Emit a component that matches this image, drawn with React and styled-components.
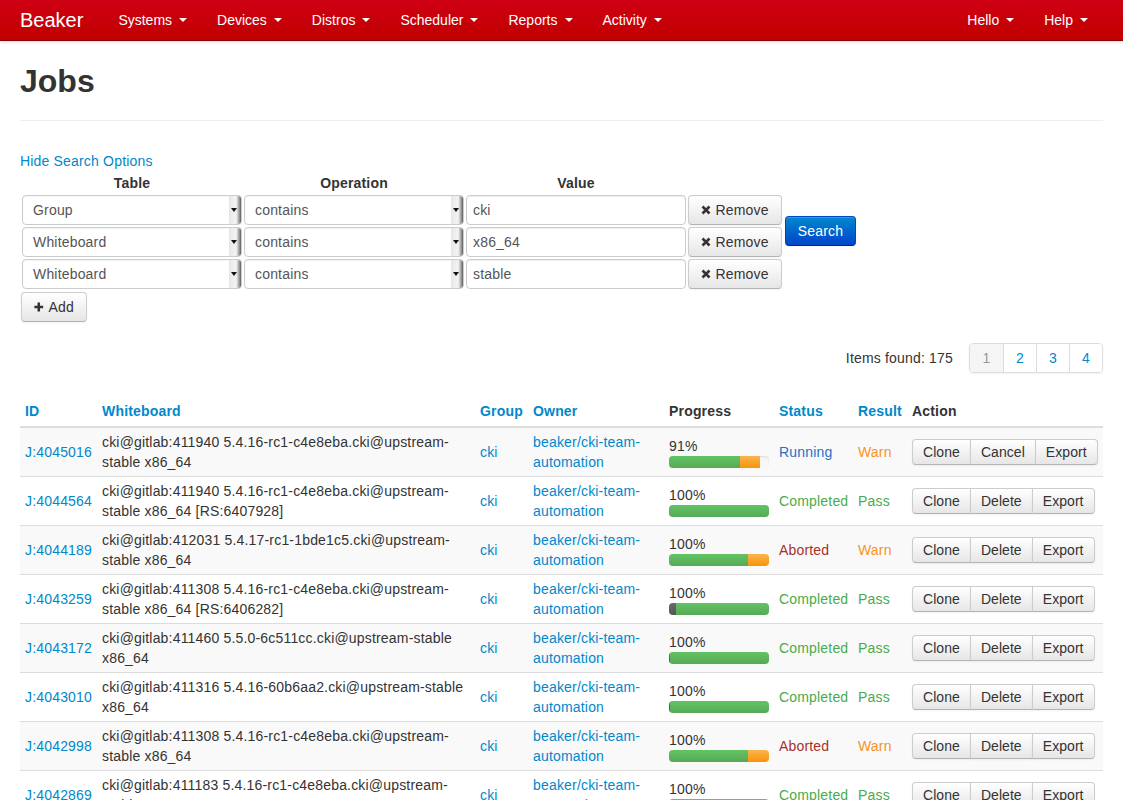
import React from 'react'
import styled, { createGlobalStyle } from 'styled-components'

const GlobalStyle = createGlobalStyle`
  body {
    margin: 0;
    background: #fff;
    font-family: "Liberation Sans", Arial, sans-serif;
    font-size: 14px;
    line-height: 20px;
    letter-spacing: 0.18px;
    color: #333;
  }
  * { box-sizing: border-box; }
`

const navLeft = ['Systems', 'Devices', 'Distros', 'Scheduler', 'Reports', 'Activity']
const navRight = ['Hello', 'Help']

const filters = [
  { table: 'Group', op: 'contains', value: 'cki' },
  { table: 'Whiteboard', op: 'contains', value: 'x86_64' },
  { table: 'Whiteboard', op: 'contains', value: 'stable' },
]

const jobs = [
  { id: 'J:4045016', wb: 'cki@gitlab:411940 5.4.16-rc1-c4e8eba.cki@upstream-stable x86_64', pct: '91%', bar: [0, 71, 20], status: 'Running', result: 'Warn', mid: 'Cancel' },
  { id: 'J:4044564', wb: 'cki@gitlab:411940 5.4.16-rc1-c4e8eba.cki@upstream-stable x86_64 [RS:6407928]', pct: '100%', bar: [0, 100, 0], status: 'Completed', result: 'Pass', mid: 'Delete' },
  { id: 'J:4044189', wb: 'cki@gitlab:412031 5.4.17-rc1-1bde1c5.cki@upstream-stable x86_64', pct: '100%', bar: [0, 79, 21], status: 'Aborted', result: 'Warn', mid: 'Delete' },
  { id: 'J:4043259', wb: 'cki@gitlab:411308 5.4.16-rc1-c4e8eba.cki@upstream-stable x86_64 [RS:6406282]', pct: '100%', bar: [7, 93, 0], status: 'Completed', result: 'Pass', mid: 'Delete' },
  { id: 'J:4043172', wb: 'cki@gitlab:411460 5.5.0-6c511cc.cki@upstream-stable x86_64', pct: '100%', bar: [1, 99, 0], status: 'Completed', result: 'Pass', mid: 'Delete' },
  { id: 'J:4043010', wb: 'cki@gitlab:411316 5.4.16-60b6aa2.cki@upstream-stable x86_64', pct: '100%', bar: [1, 99, 0], status: 'Completed', result: 'Pass', mid: 'Delete' },
  { id: 'J:4042998', wb: 'cki@gitlab:411308 5.4.16-rc1-c4e8eba.cki@upstream-stable x86_64', pct: '100%', bar: [0, 79, 21], status: 'Aborted', result: 'Warn', mid: 'Delete' },
  { id: 'J:4042869', wb: 'cki@gitlab:411183 5.4.16-rc1-c4e8eba.cki@upstream-stable x86_64', pct: '100%', bar: [0, 100, 0], status: 'Completed', result: 'Pass', mid: 'Delete' },
]

const statusColors = {
  Running: '#2a6fc4',
  Completed: '#4aab4a',
  Aborted: '#a8302c',
  Warn: '#f7941d',
  Pass: '#4aab4a',
}

export default function App() {
  return (
    <>
      <GlobalStyle />
      <Navbar>
        <Brand>Beaker</Brand>
        <NavList>
          {navLeft.map(n => (
            <NavItem key={n}>{n}<Caret /></NavItem>
          ))}
        </NavList>
        <NavList right>
          {navRight.map(n => (
            <NavItem key={n}>{n}<Caret /></NavItem>
          ))}
        </NavList>
      </Navbar>

      <Container>
        <PageHeader>
          <Title>Jobs</Title>
        </PageHeader>

        <Link>Hide Search Options</Link>

        <SearchArea>
          <SearchGrid>
            <ColLabel>Table</ColLabel>
            <ColLabel>Operation</ColLabel>
            <ColLabel>Value</ColLabel>
            <span />
            {filters.map((f, i) => (
              <React.Fragment key={i}>
                <Select>
                  {f.table}
                  <SelectArrow />
                </Select>
                <Select>
                  {f.op}
                  <SelectArrow />
                </Select>
                <TextInput>{f.value}</TextInput>
                <Button>
                  <svg width="10" height="10" viewBox="0 0 10 10">
                    <path d="M1.5 1.5 L8.5 8.5 M8.5 1.5 L1.5 8.5" stroke="#333" strokeWidth="2.6" strokeLinecap="butt" />
                  </svg>
                  Remove
                </Button>
              </React.Fragment>
            ))}
          </SearchGrid>
          <PrimaryButton>Search</PrimaryButton>
        </SearchArea>

        <AddButton>
          <svg width="12" height="12" viewBox="0 0 12 12">
            <path d="M6 0.5 V11.5 M0.5 6 H11.5" stroke="#333" strokeWidth="3.2" />
          </svg>
          Add
        </AddButton>

        <ResultsBar>
          <span>Items found: 175</span>
          <Pagination>
            {['1', '2', '3', '4'].map((p, i) => (
              <PageLink key={p} active={i === 0}>{p}</PageLink>
            ))}
          </Pagination>
        </ResultsBar>

        <Table>
          <colgroup>
            <col style={{ width: 77 }} />
            <col style={{ width: 378 }} />
            <col style={{ width: 53 }} />
            <col style={{ width: 136 }} />
            <col style={{ width: 110 }} />
            <col style={{ width: 79 }} />
            <col style={{ width: 54 }} />
            <col style={{ width: 196 }} />
          </colgroup>
          <thead>
            <tr>
              <Th link>ID</Th>
              <Th link>Whiteboard</Th>
              <Th link>Group</Th>
              <Th link>Owner</Th>
              <Th>Progress</Th>
              <Th link>Status</Th>
              <Th link>Result</Th>
              <Th>Action</Th>
            </tr>
          </thead>
          <tbody>
            {jobs.map((j, i) => (
              <Row key={j.id} striped={i % 2 === 0}>
                <Td><Link>{j.id}</Link></Td>
                <Td>{j.wb}</Td>
                <Td><Link>cki</Link></Td>
                <Td><Link>beaker/cki-team-automation</Link></Td>
                <Td>
                  <div>{j.pct}</div>
                  <Progress>
                    <Segment kind="dark" style={{ width: `${j.bar[0]}%` }} />
                    <Segment kind="green" style={{ width: `${j.bar[1]}%` }} />
                    <Segment kind="orange" style={{ width: `${j.bar[2]}%` }} />
                  </Progress>
                </Td>
                <Td><Status color={statusColors[j.status]}>{j.status}</Status></Td>
                <Td><Status color={statusColors[j.result]}>{j.result}</Status></Td>
                <Td>
                  <BtnGroup>
                    <GroupBtn>Clone</GroupBtn>
                    <GroupBtn>{j.mid}</GroupBtn>
                    <GroupBtn>Export</GroupBtn>
                  </BtnGroup>
                </Td>
              </Row>
            ))}
          </tbody>
        </Table>
      </Container>
    </>
  )
}

const Navbar = styled.div`
  display: flex;
  align-items: center;
  height: 41px;
  padding: 0 20px;
  background: linear-gradient(to bottom, #cf0014, #c00000);
  border-bottom: 1px solid #8a0000;
  box-shadow: 0 1px 3px rgba(0, 0, 0, 0.15);
`

const Brand = styled.div`
  color: #fff;
  font-size: 20px;
  line-height: 20px;
  letter-spacing: 0;
  padding: 10px 20px 10px 0;
`

const NavList = styled.div`
  display: flex;
  margin-left: ${props => (props.right ? 'auto' : '0')};
`

const NavItem = styled.div`
  display: flex;
  align-items: center;
  color: #fff;
  padding: 10px 15px;
  font-size: 14px;
  letter-spacing: 0;
`

const Caret = styled.span`
  display: inline-block;
  margin-left: 7px;
  width: 0;
  height: 0;
  border-left: 4px solid transparent;
  border-right: 4px solid transparent;
  border-top: 4px solid #fff;
`

const Container = styled.div`
  padding: 0 20px;
`

const PageHeader = styled.div`
  padding: 20px 0 9px;
  border-bottom: 1px solid #eee;
  margin-bottom: 30px;
`

const Title = styled.h1`
  margin: 0 0 10px;
  font-size: 32px;
  line-height: 40px;
  font-weight: bold;
  letter-spacing: 0;
  color: #333;
`

const Link = styled.a`
  color: #0088cc;
  cursor: pointer;
  display: inline-block;
`

const SearchArea = styled.div`
  display: flex;
  align-items: flex-start;
`

const SearchGrid = styled.div`
  display: grid;
  grid-template-columns: 220px 220px 220px 94px;
  grid-auto-rows: 30px;
  grid-template-rows: 20px;
  gap: 2px;
  padding: 2px;
`

const ColLabel = styled.div`
  font-weight: bold;
  text-align: center;
  line-height: 20px;
`

const Select = styled.div`
  position: relative;
  border: 1px solid #ccc;
  border-radius: 4px;
  background: #fff;
  color: #555;
  padding: 4px 10px;
  line-height: 20px;
  box-shadow: inset 0 1px 1px rgba(0, 0, 0, 0.04);
`

const SelectArrow = styled.span`
  position: absolute;
  right: 0;
  top: 0;
  bottom: 0;
  width: 12px;
  background: linear-gradient(to right, #e6e6e6, #f4f4f4 60%, #8a8a8a 90%, #5a5a5a);
  border-radius: 0 3px 3px 0;
  &::after {
    content: '';
    position: absolute;
    left: 2px;
    top: 12px;
    border-left: 3px solid transparent;
    border-right: 3px solid transparent;
    border-top: 4px solid #111;
  }
`

const TextInput = styled.div`
  border: 1px solid #ccc;
  border-radius: 4px;
  background: #fff;
  color: #555;
  padding: 4px 6px;
  line-height: 20px;
  box-shadow: inset 0 1px 1px rgba(0, 0, 0, 0.075);
`

const Button = styled.button`
  display: inline-flex;
  align-items: center;
  justify-content: center;
  gap: 4px;
  font-family: inherit;
  font-size: 14px;
  line-height: 20px;
  letter-spacing: 0.18px;
  color: #333;
  padding: 4px 12px;
  border: 1px solid #ccc;
  border-bottom-color: #b3b3b3;
  border-radius: 4px;
  background: linear-gradient(to bottom, #ffffff, #e6e6e6);
  box-shadow: inset 0 1px 0 rgba(255, 255, 255, 0.2), 0 1px 2px rgba(0, 0, 0, 0.05);
  cursor: pointer;
`

const PrimaryButton = styled(Button)`
  margin-top: 45px;
  margin-left: 1px;
  width: 71px;
  height: 30px;
  color: #fff;
  background: linear-gradient(to bottom, #0088cc, #0044cc);
  border-color: #0044cc #0044cc #002a80;
`

const AddButton = styled(Button)`
  margin: 1px 0 0 1px;
  width: 66px;
  height: 30px;
  gap: 5px;
`

const ResultsBar = styled.div`
  display: flex;
  justify-content: flex-end;
  align-items: center;
  gap: 16px;
  margin-top: 21px;
`

const Pagination = styled.div`
  display: flex;
  border: 1px solid #ddd;
  border-radius: 4px;
  overflow: hidden;
  box-shadow: 0 1px 2px rgba(0, 0, 0, 0.05);
`

const PageLink = styled.a`
  width: 33px;
  height: 28px;
  display: flex;
  align-items: center;
  justify-content: center;
  color: ${props => (props.active ? '#999' : '#0088cc')};
  background: ${props => (props.active ? '#f5f5f5' : '#fff')};
  & + & {
    border-left: 1px solid #ddd;
  }
`

const Table = styled.table`
  width: 100%;
  margin-top: 23px;
  border-collapse: collapse;
  table-layout: fixed;
`

const Th = styled.th`
  text-align: left;
  padding: 5px 5px;
  line-height: 20px;
  font-weight: bold;
  color: ${props => (props.link ? '#0088cc' : '#333')};
  border-bottom: 2px solid #ddd;
  vertical-align: bottom;
`

const Row = styled.tr`
  background: ${props => (props.striped ? '#f9f9f9' : '#fff')};
`

const Td = styled.td`
  padding: 4px 5px;
  line-height: 20px;
  vertical-align: middle;
  border-top: 1px solid #ddd;
`

const Progress = styled.div`
  display: flex;
  width: 100px;
  height: 12px;
  border-radius: 4px;
  overflow: hidden;
  background: linear-gradient(to bottom, #f5f5f5, #f9f9f9);
  box-shadow: inset 0 1px 2px rgba(0, 0, 0, 0.1);
`

const segmentColors = {
  dark: 'linear-gradient(to bottom, #6a6a6a, #555)',
  green: 'linear-gradient(to bottom, #62c462, #57a957)',
  orange: 'linear-gradient(to bottom, #fbb450, #f89406)',
}

const Segment = styled.div`
  height: 100%;
  background: ${props => segmentColors[props.kind]};
`

const Status = styled.span`
  color: ${props => props.color};
`

const BtnGroup = styled.div`
  display: inline-flex;
`

const GroupBtn = styled(Button)`
  padding: 2px 10px;
  line-height: 20px;
  letter-spacing: 0.06px;
  border-radius: 0;
  &:first-child {
    border-radius: 4px 0 0 4px;
  }
  &:last-child {
    border-radius: 0 4px 4px 0;
  }
  & + & {
    margin-left: -1px;
  }
`
